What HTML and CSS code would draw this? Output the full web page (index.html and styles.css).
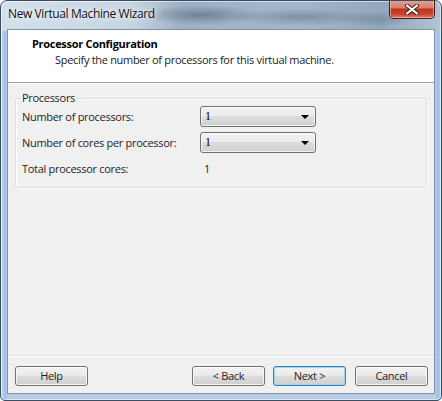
FILE: index.html
```html
<!DOCTYPE html>
<html>
<head>
<meta charset="utf-8">
<title>New Virtual Machine Wizard</title>
<link rel="stylesheet" href="styles.css">
</head>
<body>
<div class="window">
  <div class="titlebar">
    <span class="title">New Virtual Machine Wizard</span>
    <button class="close" aria-label="Close">
      <svg width="14" height="11" viewBox="0 0 14 11">
        <path d="M2 1.5 L12 9.5 M12 1.5 L2 9.5" stroke="#3a2020" stroke-width="4" stroke-linecap="round"/>
        <path d="M2 1.5 L12 9.5 M12 1.5 L2 9.5" stroke="#ffffff" stroke-width="2.2" stroke-linecap="round"/>
      </svg>
    </button>
  </div>
  <div class="client">
    <div class="header">
      <div class="h-title">Processor Configuration</div>
      <div class="h-sub">Specify the number of processors for this virtual machine.</div>
    </div>
    <div class="content">
      <fieldset class="group">
        <legend>Processors</legend>
        <div class="row">
          <span class="label">Number of processors:</span>
          <div class="combo"><span>1</span><i class="arrow"></i></div>
        </div>
        <div class="row">
          <span class="label">Number of cores per processor:</span>
          <div class="combo"><span>1</span><i class="arrow"></i></div>
        </div>
        <div class="row">
          <span class="label">Total processor cores:</span>
          <span class="value">1</span>
        </div>
      </fieldset>
    </div>
    <div class="footer">
      <button class="btn">Help</button>
      <div class="spacer"></div>
      <button class="btn">&lt; Back</button>
      <button class="btn default">Next &gt;</button>
      <button class="btn cancel">Cancel</button>
    </div>
  </div>
</div>
</body>
</html>
```

FILE: styles.css
```css
* { box-sizing: border-box; }
html, body {
  margin: 0;
  padding: 0;
  width: 442px;
  height: 401px;
  overflow: hidden;
  background: #ffffff;
}
body {
  font-family: "Open Sans", "Noto Sans", "Liberation Sans", sans-serif;
  font-size: 11px;
  letter-spacing: -0.3px;
  color: #1e1e1e;
}
.window {
  width: 442px;
  height: 401px;
  border: 1px solid #3d4d60;
  border-radius: 7px 7px 5px 5px;
  background:
    radial-gradient(ellipse 60px 10px at 200px 14px, rgba(70,90,115,0.55), transparent),
    radial-gradient(ellipse 70px 9px at 300px 16px, rgba(80,100,125,0.45), transparent),
    radial-gradient(ellipse 40px 8px at 375px 18px, rgba(90,110,135,0.4), transparent),
    linear-gradient(90deg, #d3dfeb 0px, #c7d5e3 130px, #9fb1c4 180px, #a4b6c9 300px, #93a7bc 380px, #b3c4d5 442px) top left / 100% 30px no-repeat,
    linear-gradient(90deg, #c9dcf0 0px, #9dbfe3 4px, #b7cde6 7px, #b7cde6 434px, #9dbfe3 437px, #c9dcf0 442px);
  display: flex;
  flex-direction: column;
  overflow: hidden;
  box-shadow: inset 0 0 0 1px rgba(255,255,255,0.55);
}
.titlebar {
  height: 28px;
  display: flex;
  align-items: flex-start;
  justify-content: space-between;
  padding-left: 7px;
  flex: none;
}
.title {
  font-family: "Open Sans", "Noto Sans", sans-serif;
  font-size: 12px;
  letter-spacing: -0.4px;
  color: #111;
  margin-top: 4px;
  text-shadow: 0 0 8px rgba(255,255,255,0.9), 0 0 4px rgba(255,255,255,0.9);
}
.close {
  width: 46px;
  height: 19px;
  margin: -1px 6px 0 0;
  padding: 0;
  border: 1px solid #4a1a16;
  border-top: none;
  border-radius: 0 0 5px 5px;
  background: linear-gradient(#e8a496 0%, #d47c6a 45%, #b8321f 50%, #c84a30 80%, #e0806a 100%);
  box-shadow: inset 0 0 0 1px rgba(255,220,210,0.5);
  display: flex;
  align-items: center;
  justify-content: center;
}
.client {
  flex: 1;
  margin: 0 6px 6px 6px;
  border: 1px solid #7f93a8;
  background: #f0f0f0;
  display: flex;
  flex-direction: column;
}
.header {
  height: 53px;
  flex: none;
  background: #ffffff;
  border-bottom: 1px solid #a0a0a0;
  box-shadow: 0 1px 0 #ffffff;
  padding: 6px 0 0 24px;
}
.h-title {
  font-weight: bold;
  font-size: 11px;
  line-height: 16px;
  color: #000;
}
.h-sub {
  padding-left: 23px;
  line-height: 16px;
  color: #1a1a1a;
}
.content {
  flex: 1;
  padding: 7px 7px 0 7px;
}
.group {
  margin: 0;
  padding: 0 6px 6px 6px;
  border: 1px solid #d5dfe5;
  border-radius: 3px;
  box-shadow: inset 1px 1px 0 #ffffff, 1px 1px 0 #ffffff;
  display: flex;
  flex-direction: column;
  gap: 5px;
  min-width: 0;
  height: 98px;
}
.group legend {
  padding: 0 1px;
  margin-left: -1px;
  line-height: 16px;
  color: #1e1e1e;
}
.row {
  display: flex;
  align-items: center;
  height: 21px;
}
.label {
  width: 178px;
  flex: none;
}
.value {
  padding-left: 4px;
}
.combo {
  width: 116px;
  height: 21px;
  border: 1px solid #707070;
  border-radius: 3px;
  background: linear-gradient(#f2f2f2 0%, #ebebeb 45%, #dddddd 50%, #cfcfcf 100%);
  box-shadow: inset 0 0 0 1px rgba(255,255,255,0.7);
  display: flex;
  align-items: center;
  justify-content: space-between;
  padding: 0 6px 0 4px;
  font-family: "Liberation Serif", serif;
  font-size: 12px;
  letter-spacing: 0;
  color: #000;
}
.arrow {
  width: 0;
  height: 0;
  border-left: 4px solid transparent;
  border-right: 4px solid transparent;
  border-top: 4px solid #000;
}
.footer {
  height: 38px;
  flex: none;
  border-top: 1px solid #dfdfdf;
  box-shadow: inset 0 1px 0 #ffffff;
  display: flex;
  align-items: flex-start;
  padding: 10px 6px 0 7px;
}
.spacer { flex: 1; }
.btn {
  width: 73px;
  height: 20px;
  margin: 0;
  padding: 0;
  border: 1px solid #707070;
  border-radius: 3px;
  background: linear-gradient(#f2f2f2 0%, #ebebeb 45%, #dddddd 50%, #cfcfcf 100%);
  box-shadow: inset 0 0 0 1px rgba(255,255,255,0.8);
  font-family: "Open Sans", "Noto Sans", sans-serif;
  font-size: 11px;
  letter-spacing: -0.3px;
  color: #1e1e1e;
  line-height: 18px;
}
.btn.default {
  margin-left: 8px;
  border-color: #3c7fb1;
  box-shadow: inset 0 0 0 1px #9cd6f4;
}
.btn.cancel {
  margin-left: 9px;
}
```
